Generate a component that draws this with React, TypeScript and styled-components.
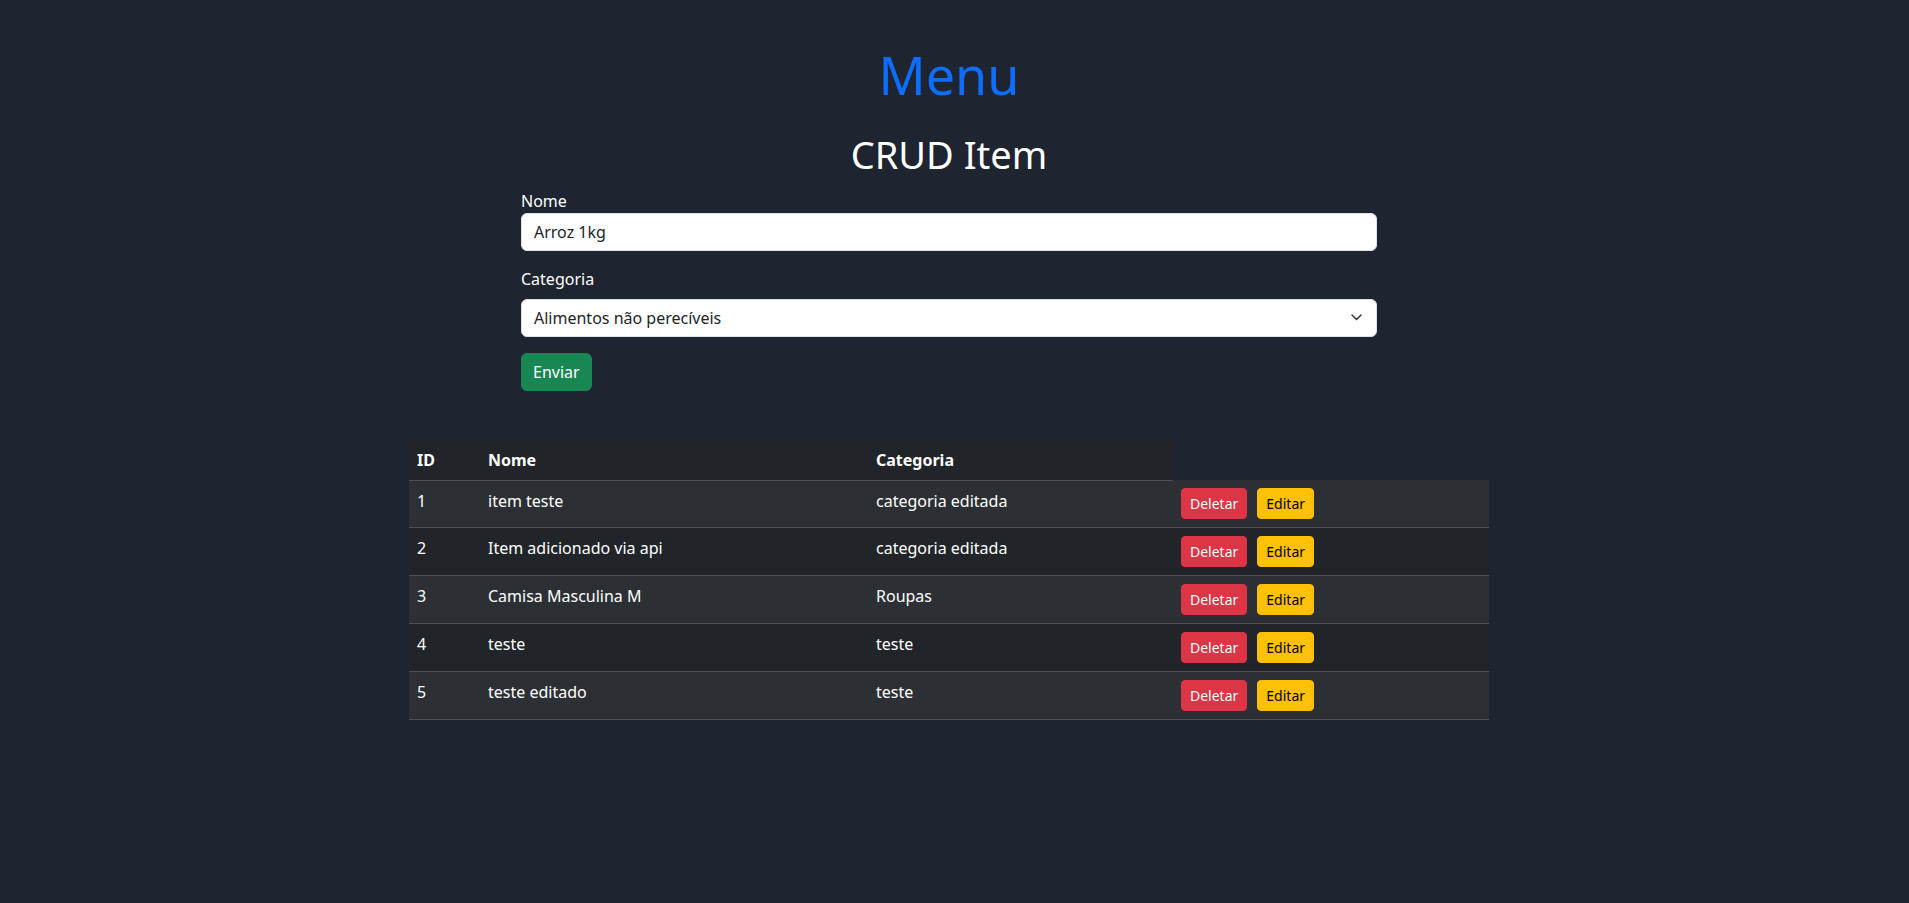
import React from "react";
import styled, { createGlobalStyle } from "styled-components";

const GlobalStyle = createGlobalStyle`
  html, body {
    margin: 0;
    padding: 0;
    background: #1e2430;
  }
  body {
    font-family: "Noto Sans", "Open Sans", sans-serif;
    font-size: 16px;
    line-height: 1.5;
    color: #dee2e6;
    min-height: 100vh;
  }
  * { box-sizing: border-box; }
`;

const Page = styled.div`
  display: flex;
  flex-direction: column;
  align-items: center;
  padding-right: 11px;
  min-height: 100vh;
`;

const Title = styled.h1`
  margin: 44px 0 0;
  font-size: 52px;
  font-weight: 400;
  line-height: 1.2;
  color: #0d6efd;
`;

const Subtitle = styled.h2`
  margin: 26px 0 0;
  font-size: 38px;
  font-weight: 400;
  line-height: 1.2;
  color: #ffffff;
`;

const Form = styled.form`
  width: 856px;
  margin-top: 11px;
  display: flex;
  flex-direction: column;
`;

const Field = styled.div`
  display: flex;
  flex-direction: column;
  margin-bottom: 16px;
`;

const Label = styled.label<{ $gap?: number }>`
  display: block;
  color: #ffffff;
  line-height: 24px;
  margin-bottom: ${(p) => p.$gap ?? 0}px;
`;

const Input = styled.input`
  display: block;
  width: 100%;
  height: 38px;
  padding: 6px 12px;
  font: inherit;
  font-size: 16px;
  line-height: 24px;
  color: #212529;
  background: #ffffff;
  border: 1px solid #dee2e6;
  border-radius: 6px;
  outline: none;
`;

const SelectWrap = styled.div`
  position: relative;
  width: 100%;
`;

const Select = styled.select`
  display: block;
  width: 100%;
  height: 38px;
  padding: 6px 36px 6px 12px;
  font: inherit;
  font-size: 16px;
  line-height: 24px;
  color: #212529;
  background: #ffffff;
  border: 1px solid #dee2e6;
  border-radius: 6px;
  appearance: none;
  -webkit-appearance: none;
  outline: none;
`;

const Chevron = styled.svg`
  position: absolute;
  right: 15px;
  top: 15px;
  width: 11px;
  height: 7px;
  pointer-events: none;
`;

const SubmitButton = styled.button`
  align-self: flex-start;
  height: 38px;
  padding: 6px 11px;
  font: inherit;
  font-size: 16px;
  line-height: 24px;
  color: #ffffff;
  background: #198754;
  border: 1px solid #198754;
  border-radius: 6px;
  cursor: pointer;
`;

const Table = styled.table`
  width: 1080px;
  margin-top: 49px;
  border-collapse: collapse;
  color: #ffffff;
  font-size: 16px;
  line-height: 24px;
`;

const Th = styled.th<{ $w: number }>`
  width: ${(p) => p.$w}px;
  padding: 8px;
  text-align: left;
  font-weight: 700;
  background: #212529;
  border-bottom: 1px solid #4d5154;
  vertical-align: top;
`;

const Row = styled.tr<{ $striped: boolean }>`
  background: ${(p) => (p.$striped ? "#2c3034" : "#212529")};
`;

const Td = styled.td`
  padding: 8px;
  vertical-align: top;
  border-bottom: 1px solid #4d5154;
`;

const ActionCell = styled(Td)`
  white-space: nowrap;
`;

const SmallButton = styled.button<{ $variant: "danger" | "warning" }>`
  display: inline-block;
  height: 31px;
  padding: 4px 8px;
  margin-right: 10px;
  font: inherit;
  font-size: 14px;
  line-height: 21px;
  border-radius: 4px;
  border: 1px solid ${(p) => (p.$variant === "danger" ? "#dc3545" : "#ffc107")};
  background: ${(p) => (p.$variant === "danger" ? "#dc3545" : "#ffc107")};
  color: ${(p) => (p.$variant === "danger" ? "#ffffff" : "#000000")};
  vertical-align: top;
  cursor: pointer;
`;

const items = [
  { id: 1, nome: "item teste", categoria: "categoria editada" },
  { id: 2, nome: "Item adicionado via api", categoria: "categoria editada" },
  { id: 3, nome: "Camisa Masculina M", categoria: "Roupas" },
  { id: 4, nome: "teste", categoria: "teste" },
  { id: 5, nome: "teste editado", categoria: "teste" },
];

export default function App() {
  return (
    <>
      <GlobalStyle />
      <Page>
        <Title>Menu</Title>
        <Subtitle>CRUD Item</Subtitle>
        <Form onSubmit={(e) => e.preventDefault()}>
          <Field>
            <Label htmlFor="nome">Nome</Label>
            <Input id="nome" defaultValue="Arroz 1kg" />
          </Field>
          <Field>
            <Label htmlFor="categoria" $gap={8}>
              Categoria
            </Label>
            <SelectWrap>
              <Select id="categoria" defaultValue="nao">
                <option value="nao">Alimentos não perecíveis</option>
                <option value="roupas">Roupas</option>
              </Select>
              <Chevron viewBox="0 0 11 7">
                <path
                  d="M1 1 5.5 5.5 10 1"
                  fill="none"
                  stroke="#343a40"
                  strokeWidth="1.5"
                  strokeLinecap="round"
                  strokeLinejoin="round"
                />
              </Chevron>
            </SelectWrap>
          </Field>
          <SubmitButton type="submit">Enviar</SubmitButton>
        </Form>
        <Table>
          <thead>
            <tr>
              <Th $w={71}>ID</Th>
              <Th $w={388}>Nome</Th>
              <Th $w={305}>Categoria</Th>
            </tr>
          </thead>
          <tbody>
            {items.map((it, i) => (
              <Row key={it.id} $striped={i % 2 === 0}>
                <Td>{it.id}</Td>
                <Td>{it.nome}</Td>
                <Td>{it.categoria}</Td>
                <ActionCell>
                  <SmallButton $variant="danger">Deletar</SmallButton>
                  <SmallButton $variant="warning">Editar</SmallButton>
                </ActionCell>
              </Row>
            ))}
          </tbody>
        </Table>
      </Page>
    </>
  );
}
